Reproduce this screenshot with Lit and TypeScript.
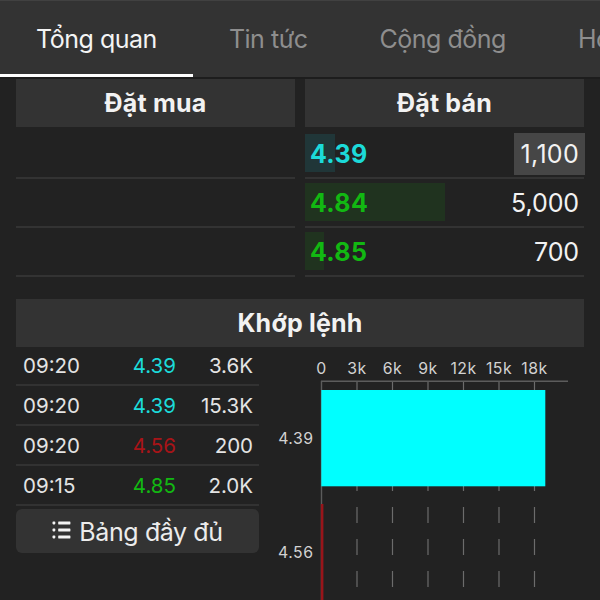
import { LitElement, css, html, svg } from "lit";

type Tone = "cyan" | "green" | "red";

interface Ask {
  price: string;
  volume: string;
  tone: Tone;
  fill: number;
  flash?: boolean;
}

interface Trade {
  time: string;
  price: string;
  volume: string;
  tone: Tone;
}

const TABS = ["Tổng quan", "Tin tức", "Cộng đồng", "Ho"];

const ASKS: Ask[] = [
  { price: "4.39", volume: "1,100", tone: "cyan", fill: 30, flash: true },
  { price: "4.84", volume: "5,000", tone: "green", fill: 140 },
  { price: "4.85", volume: "700", tone: "green", fill: 19 },
];

const TRADES: Trade[] = [
  { time: "09:20", price: "4.39", volume: "3.6K", tone: "cyan" },
  { time: "09:20", price: "4.39", volume: "15.3K", tone: "cyan" },
  { time: "09:20", price: "4.56", volume: "200", tone: "red" },
  { time: "09:15", price: "4.85", volume: "2.0K", tone: "green" },
];

/** Horizontal bars of matched volume per price level. */
export class VolumeChart extends LitElement {
  static override styles = css`
    :host {
      display: block;
    }
    svg {
      display: block;
    }
    text {
      font-family: Inter, "Noto Sans", sans-serif;
      font-size: 15.8px;
      letter-spacing: 0.5px;
      fill: #d2d2d2;
    }
    .tick {
      text-anchor: middle;
    }
    .price {
      text-anchor: end;
    }
    .axis {
      stroke: #5c5c5c;
      stroke-width: 1.4;
    }
    .grid {
      stroke: #6c6c6c;
      stroke-width: 1.2;
      stroke-dasharray: 16 16;
      stroke-dashoffset: 2;
    }
    .bar-cyan {
      fill: #00ffff;
    }
    .bar-red {
      fill: #98151a;
    }
  `;

  private _ticks = ["0", "3k", "6k", "9k", "12k", "15k", "18k"];

  private _x(index: number) {
    return 62.5 + index * 35.5;
  }

  override render() {
    return html`
      <svg width="341" height="253" viewBox="0 0 341 253">
        ${this._ticks.slice(1).map(
          (_, i) => svg`<line class="grid" x1=${this._x(i + 1)} x2=${this._x(i + 1)} y1="34" y2="253" />`,
        )}
        <line class="axis" x1="62" x2="309" y1="34.2" y2="34.2" />
        <line class="axis" x1="62.5" x2="62.5" y1="34" y2="253" />
        <rect class="bar-cyan" x="62.3" y="43" width="224" height="96.3" />
        <rect class="bar-red" x="61.8" y="157" width="2.6" height="96" />
        ${this._ticks.map(
          (label, i) => svg`<text class="tick" x=${this._x(i)} y="27">${label}</text>`,
        )}
        <text class="price" x="54.5" y="97">4.39</text>
        <text class="price" x="54.5" y="211">4.56</text>
      </svg>
    `;
  }
}

export class AppRoot extends LitElement {
  static override styles = css`
    :host {
      display: block;
      width: 600px;
      height: 600px;
      overflow: hidden;
      background: #222;
      color: #f2f2f2;
      font-family: Inter, "Noto Sans", sans-serif;
    }
    * {
      box-sizing: border-box;
    }
    .tabs {
      display: flex;
      height: 79px;
      background: #333;
      border-top: 1px solid #414141;
      border-bottom: 2px solid #1d1d1d;
    }
    .tab {
      flex: none;
      height: 76px;
      padding: 0 36px;
      line-height: 76px;
      font-size: 25px;
      letter-spacing: -0.48px;
      color: #8e8e8e;
      white-space: nowrap;
    }
    .tab.active {
      color: #f4f4f4;
      border-bottom: 3px solid #fff;
    }
    .content {
      padding: 0 16px;
    }
    .book {
      display: grid;
      grid-template-columns: 279px 279px;
      gap: 10px;
    }
    .heading {
      height: 48px;
      line-height: 48px;
      background: #333;
      text-align: center;
      font-size: 25px;
      font-weight: 700;
      letter-spacing: 0.2px;
    }
    .level {
      display: flex;
      align-items: center;
      justify-content: space-between;
      position: relative;
      height: 49px;
      border-bottom: 2px solid #333;
      font-size: 25px;
    }
    .level:nth-child(2) {
      height: 52px;
      padding-top: 3px;
    }
    .fill {
      position: absolute;
      left: 0;
      bottom: 5px;
      height: 38px;
    }
    .fill.cyan {
      background: #203638;
    }
    .fill.green {
      background: #20331f;
    }
    .level-price {
      position: relative;
      padding-left: 5px;
      font-weight: 700;
      letter-spacing: 0.3px;
    }
    .level-volume {
      padding: 0 5px;
      line-height: 42px;
      letter-spacing: -0.1px;
    }
    .level-volume.flash {
      width: 71px;
      margin-right: -1px;
      padding-right: 6px;
      background: #464646;
      text-align: right;
      letter-spacing: 0.3px;
    }
    .cyan {
      color: #1cdad9;
    }
    .green {
      color: #12b812;
    }
    .red {
      color: #a81418;
    }
    .matches {
      margin-top: 22px;
    }
    .columns {
      display: flex;
    }
    .trades {
      flex: none;
      width: 243px;
    }
    .trade {
      display: grid;
      grid-template-columns: 80px 73px 1fr;
      height: 40px;
      padding: 0 6px 0 7px;
      border-bottom: 2px solid #323232;
      font-size: 20.5px;
      line-height: 40px;
      color: #e4e4e4;
    }
    .trade:first-child {
      height: 39px;
      line-height: 38px;
    }
    .num {
      text-align: right;
    }
    .more {
      display: flex;
      align-items: center;
      justify-content: center;
      gap: 8px;
      width: 100%;
      height: 44px;
      margin-top: 3px;
      padding: 2px 0 0;
      border: none;
      border-radius: 6px;
      background: #333;
      color: #ececec;
      font: inherit;
      font-size: 25px;
      letter-spacing: -0.4px;
    }
    .more svg {
      flex: none;
      margin-top: -4px;
    }
  `;

  private _ask(ask: Ask) {
    return html`
      <div class="level">
        <div class="fill ${ask.tone}" style="width: ${ask.fill}px"></div>
        <span class="level-price ${ask.tone}">${ask.price}</span>
        <span class="level-volume ${ask.flash ? "flash" : ""}">${ask.volume}</span>
      </div>
    `;
  }

  private _trade(trade: Trade) {
    return html`
      <div class="trade">
        <span>${trade.time}</span>
        <span class="num ${trade.tone}">${trade.price}</span>
        <span class="num">${trade.volume}</span>
      </div>
    `;
  }

  override render() {
    return html`
      <nav class="tabs">
        ${TABS.map((tab, i) => html`<div class="tab ${i === 0 ? "active" : ""}">${tab}</div>`)}
      </nav>
      <main class="content">
        <section class="book">
          <div>
            <div class="heading">Đặt mua</div>
            ${ASKS.map(() => html`<div class="level"></div>`)}
          </div>
          <div>
            <div class="heading">Đặt bán</div>
            ${ASKS.map((ask) => this._ask(ask))}
          </div>
        </section>
        <section class="matches">
          <div class="heading">Khớp lệnh</div>
          <div class="columns">
            <div class="trades">
              ${TRADES.map((trade) => this._trade(trade))}
              <button class="more">
                <svg width="19" height="18" viewBox="0 0 19 18" fill="#f4f4f4">
                  <rect x="0.5" y="0.6" width="2.8" height="2.8" rx="0.8" />
                  <rect x="0.5" y="7.6" width="2.8" height="2.8" rx="0.8" />
                  <rect x="0.5" y="14.6" width="2.8" height="2.8" rx="0.8" />
                  <rect x="6.2" y="0.5" width="12.2" height="3" rx="0.4" />
                  <rect x="6.2" y="7.5" width="12.2" height="3" rx="0.4" />
                  <rect x="6.2" y="14.5" width="12.2" height="3" rx="0.4" />
                </svg>
                <span>Bảng đầy đủ</span>
              </button>
            </div>
            <volume-chart></volume-chart>
          </div>
        </section>
      </main>
    `;
  }
}

if (!customElements.get("volume-chart")) {
  customElements.define("volume-chart", VolumeChart);
}

if (!customElements.get("app-root")) {
  customElements.define("app-root", AppRoot);
}
